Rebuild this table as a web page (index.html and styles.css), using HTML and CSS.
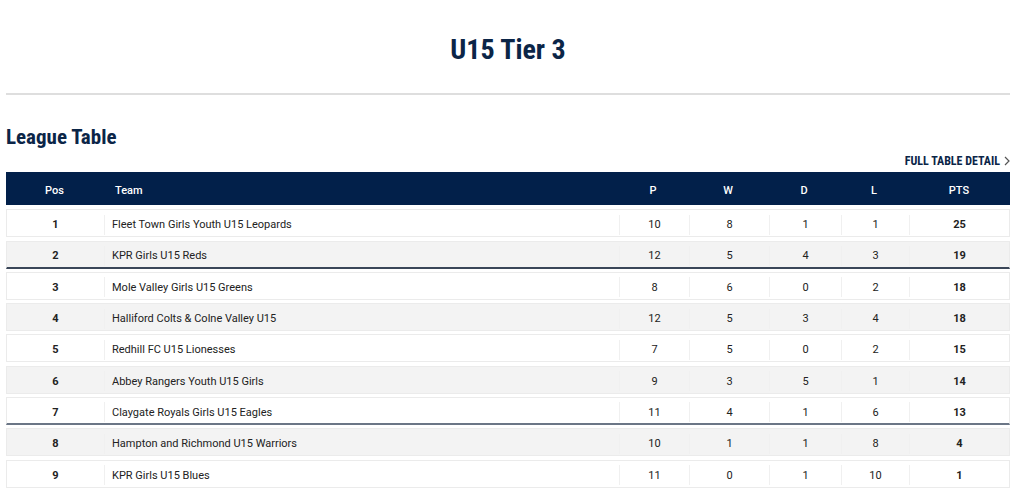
FILE: index.html
```html
<!DOCTYPE html>
<html lang="en">
<head>
<meta charset="utf-8">
<title>U15 Tier 3</title>
<link rel="stylesheet" href="styles.css">
</head>
<body>
<div class="page">
  <h1 class="title">U15 Tier 3</h1>
  <hr class="rule">
  <h2 class="section-title">League Table</h2>
  <div class="detail-row">
    <a class="detail-link" href="#">FULL TABLE DETAIL <svg class="chev" width="6" height="10" viewBox="0 0 6 10"><path d="M1 1l4 4-4 4" fill="none" stroke="#555" stroke-width="1.2"/></svg></a>
  </div>
  <div class="table">
    <div class="thead">
      <div class="c pos">Pos</div>
      <div class="c team">Team</div>
      <div class="c num">P</div>
      <div class="c num">W</div>
      <div class="c num">D</div>
      <div class="c num">L</div>
      <div class="c num">PTS</div>
    </div>
    <div class="row">
      <div class="c pos">1</div><div class="c team">Fleet Town Girls Youth U15 Leopards</div>
      <div class="c num">10</div><div class="c num">8</div><div class="c num">1</div><div class="c num">1</div><div class="c num pts">25</div>
    </div>
    <div class="row alt line">
      <div class="c pos">2</div><div class="c team">KPR Girls U15 Reds</div>
      <div class="c num">12</div><div class="c num">5</div><div class="c num">4</div><div class="c num">3</div><div class="c num pts">19</div>
    </div>
    <div class="row">
      <div class="c pos">3</div><div class="c team">Mole Valley Girls U15 Greens</div>
      <div class="c num">8</div><div class="c num">6</div><div class="c num">0</div><div class="c num">2</div><div class="c num pts">18</div>
    </div>
    <div class="row alt">
      <div class="c pos">4</div><div class="c team">Halliford Colts &amp; Colne Valley U15</div>
      <div class="c num">12</div><div class="c num">5</div><div class="c num">3</div><div class="c num">4</div><div class="c num pts">18</div>
    </div>
    <div class="row">
      <div class="c pos">5</div><div class="c team">Redhill FC U15 Lionesses</div>
      <div class="c num">7</div><div class="c num">5</div><div class="c num">0</div><div class="c num">2</div><div class="c num pts">15</div>
    </div>
    <div class="row alt">
      <div class="c pos">6</div><div class="c team">Abbey Rangers Youth U15 Girls</div>
      <div class="c num">9</div><div class="c num">3</div><div class="c num">5</div><div class="c num">1</div><div class="c num pts">14</div>
    </div>
    <div class="row line2">
      <div class="c pos">7</div><div class="c team">Claygate Royals Girls U15 Eagles</div>
      <div class="c num">11</div><div class="c num">4</div><div class="c num">1</div><div class="c num">6</div><div class="c num pts">13</div>
    </div>
    <div class="row alt">
      <div class="c pos">8</div><div class="c team">Hampton and Richmond U15 Warriors</div>
      <div class="c num">10</div><div class="c num">1</div><div class="c num">1</div><div class="c num">8</div><div class="c num pts">4</div>
    </div>
    <div class="row">
      <div class="c pos">9</div><div class="c team">KPR Girls U15 Blues</div>
      <div class="c num">11</div><div class="c num">0</div><div class="c num">1</div><div class="c num">10</div><div class="c num pts">1</div>
    </div>
  </div>
</div>
</body>
</html>
```

FILE: styles.css
```css
* { box-sizing: border-box; }
html, body { margin: 0; padding: 0; background: #fff; }
body {
  font-family: Roboto, "Liberation Sans", sans-serif;
  color: #222;
}
.page {
  width: 1004px;
  margin-left: 6px;
}
.title {
  margin: 0;
  padding-top: 35px;
  height: 93px;
  text-align: center;
  font-family: "Roboto Condensed", "Liberation Sans Narrow", Roboto, sans-serif;
  font-size: 28px;
  line-height: 30px;
  font-weight: 700;
  color: #0b2547;
}
.rule {
  margin: 0;
  border: 0;
  height: 2px;
  background: #dedede;
}
.section-title {
  margin: 0;
  padding-top: 30px;
  font-family: "Roboto Condensed", "Liberation Sans Narrow", Roboto, sans-serif;
  font-size: 21px;
  line-height: 24px;
  font-weight: 700;
  color: #0b2547;
}
.detail-row {
  display: flex;
  justify-content: flex-end;
  padding-top: 3px;
  height: 20px;
}
.detail-link {
  display: flex;
  align-items: center;
  gap: 4px;
  font-family: "Roboto Condensed", "Liberation Sans Narrow", Roboto, sans-serif;
  font-size: 12px;
  font-weight: 700;
  color: #0b2547;
  text-decoration: none;
  line-height: 12px;
}
.chev { display: block; }
.table {
  display: flex;
  flex-direction: column;
  gap: 3.3px;
  margin-top: 3px;
}
.thead, .row {
  display: grid;
  grid-template-columns: 97px 515px 70px 80px 72px 68px 1fr;
  align-items: center;
}
.thead {
  background: #02204a;
  color: #fff;
  height: 33px;
  padding-top: 3px;
  font-size: 11px;
  font-weight: 500;
  margin-bottom: 1px;
}
.thead .team { padding-left: 12px; }
.thead .c { border: 0; }
.row {
  height: 28px;
  background: #fff;
  border: 1px solid #ebebeb;
  font-size: 11px;
  color: #222;
  padding-top: 3px;
}
.row.alt { background: #f3f3f3; }
.row.line { border-bottom: 2px solid #3a4658; }
.row.line2 { border-bottom: 2px solid #6b7686; }
.c {
  height: 20px;
  display: flex;
  align-items: center;
}
.pos { justify-content: center; font-weight: 700; }
.thead .pos { font-weight: 500; }
.team { padding-left: 7px; border-left: 1px solid #f0f0f0; }
.num { justify-content: center; border-left: 1px solid #f0f0f0; }
.pts { font-weight: 700; }
```
